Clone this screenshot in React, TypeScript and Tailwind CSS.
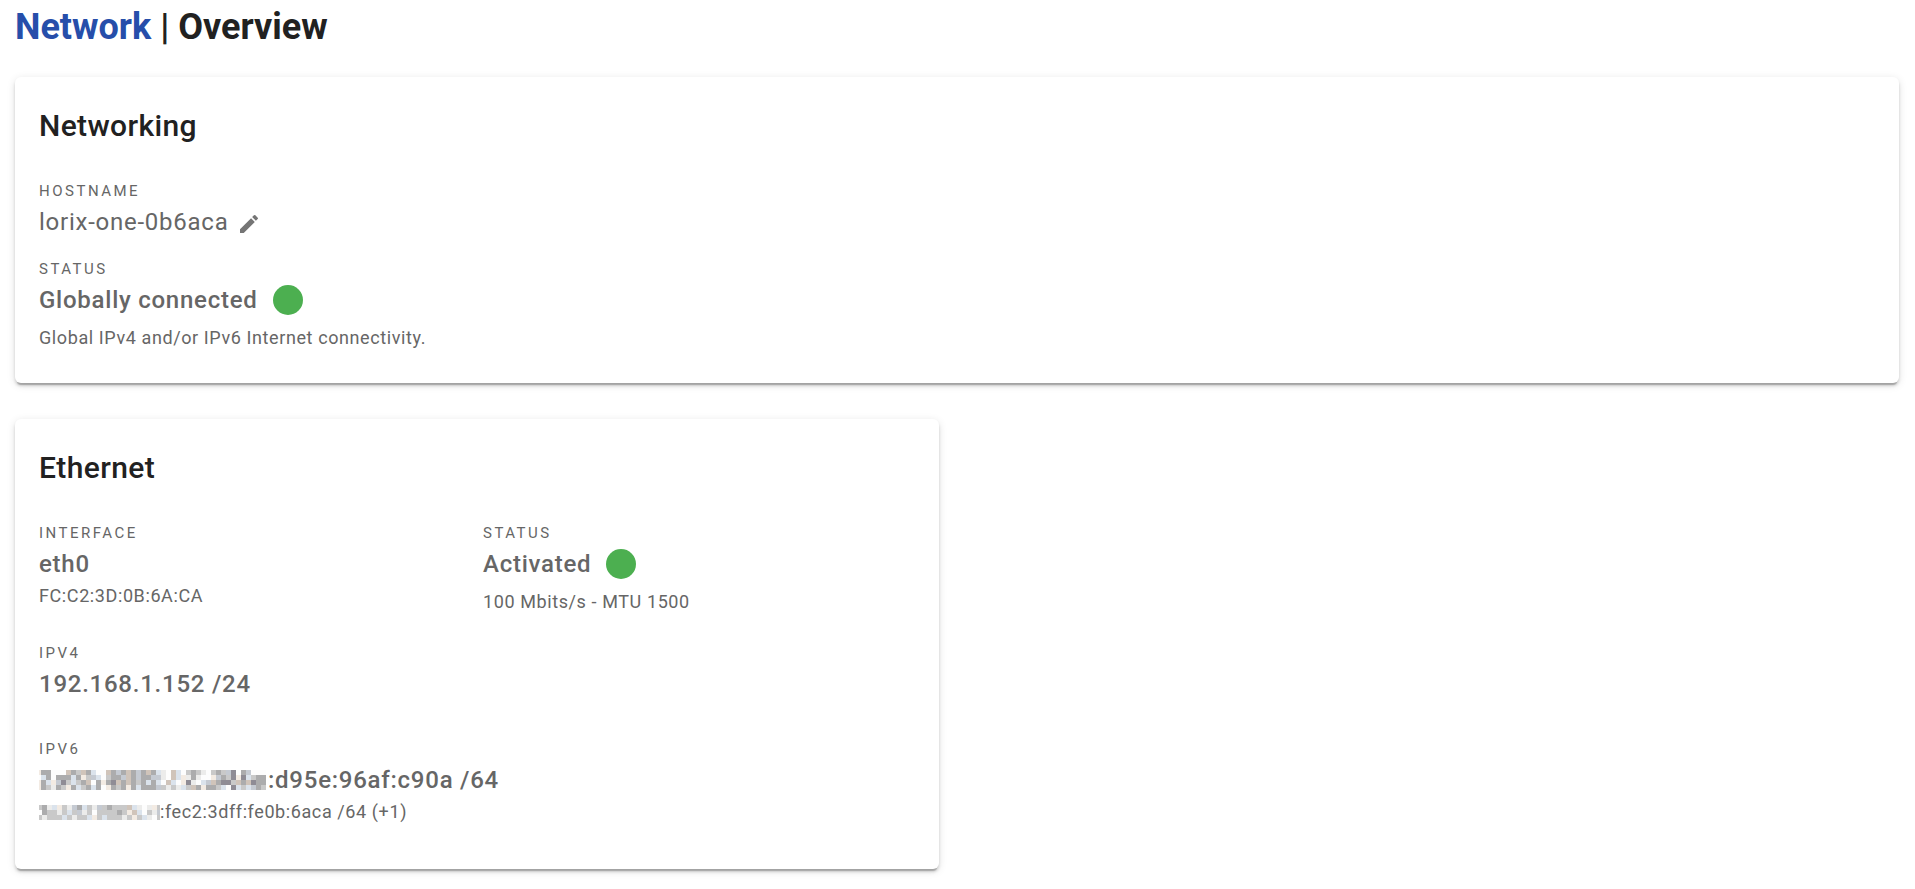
import React from 'react';
import { MdEdit } from 'react-icons/md';

interface FieldProps {
  label: string;
  children: React.ReactNode;
}

// One letter per 5px block of a redacted address prefix
const BLOCK_COLORS: Record<string, string> = {
  w: '#fdfdfd',
  l: '#ececeb',
  c: '#f3ebe3',
  b: '#dbe3ec',
  s: '#c5cad2',
  m: '#c9c9c9',
  t: '#d0c4ba',
  g: '#acacad',
  k: '#8f8c95',
};

const PRIMARY_MASK = [
  'cggwwwtgmtgbwwtgsgtgsgtgblwtbwmgmlwmgmskwgswww',
  'wbgwgggbgcmsbwmggstgsggsslwtbclglwwcsgmkckbmgg',
  'cgbcskmbmgtwgcgktgtgmgbgbwtbwcklwbstgkkmtgtkgg',
  'cgmlgmcgbmgbgwcgmgcgbgggsmlmlbmtgcggmbwkbmbsgm',
];

const SECONDARY_MASK = [
  'mglbcmlsgbmlsmgmmmtblwlcm',
  'wgmmlmbmslmwmmmmgmctbwmls',
  'mlmmmbmlmmbcmbmmmlmcmblwm',
];

const Mask: React.FC<{ rows: string[]; width: number; offset: number }> = ({ rows, width, offset }) => (
  <svg
    width={width}
    height={rows.length * 5}
    viewBox={`${offset} 0 ${width} ${rows.length * 5}`}
    shapeRendering="crispEdges"
    aria-label="Hidden"
    className="shrink-0"
  >
    {rows.map((row, y) =>
      row.split('').map((block, x) => (
        <rect key={`${x}-${y}`} x={x * 5} y={y * 5} width={5} height={5} fill={BLOCK_COLORS[block]} />
      ))
    )}
  </svg>
);

const Card: React.FC<{ title: string; children: React.ReactNode }> = ({ title, children }) => (
  <section className="rounded-md bg-white px-6 pt-[25px] shadow-[0_4px_1px_-2px_rgba(0,0,0,0.2),0_3px_3px_0_rgba(0,0,0,0.14),0_2px_8px_0_rgba(0,0,0,0.12)]">
    <h2 className="pb-[26px] text-[30px] leading-[48px] font-medium tracking-[0.0125em] text-[#212121]">{title}</h2>
    {children}
  </section>
);

const Field: React.FC<FieldProps> = ({ label, children }) => (
  <div>
    <div className="text-[15px] leading-[30px] tracking-[0.1667em] uppercase">{label}</div>
    {children}
  </div>
);

const Value: React.FC<{ children: React.ReactNode }> = ({ children }) => (
  <div className="flex items-center gap-0.5 text-2xl leading-8 font-medium tracking-[0.03125em]">{children}</div>
);

const Note: React.FC<{ children: React.ReactNode }> = ({ children }) => (
  <div className="flex items-center text-lg leading-8 tracking-[0.0333em]">{children}</div>
);

const StatusValue: React.FC<{ text: string }> = ({ text }) => (
  <div className="flex items-center gap-[15px] pb-1.5 text-2xl leading-8 font-medium tracking-[0.03125em]">
    {text}
    <span className="size-[30px] rounded-full bg-[#4caf50]" />
  </div>
);

const App: React.FC = () => {
  return (
    <main className="pr-4 pb-5 pl-[15px] font-[Roboto,sans-serif] text-[#666666]">
      <h1 className="pb-[23px] text-4xl leading-[54px] font-bold text-[#212121]">
        <a href="#network" className="text-[#264eaa]">Network</a> | Overview
      </h1>

      <Card title="Networking">
        <div className="pb-[29px]">
          <Field label="Hostname">
            <div className="flex items-center gap-[9px] pb-4 text-2xl leading-8 tracking-[0.03125em]">
              lorix-one-0b6aca
              <button aria-label="Edit hostname" className="pt-1 text-[#757575]">
                <MdEdit size={24} />
              </button>
            </div>
          </Field>
          <Field label="Status">
            <StatusValue text="Globally connected" />
            <Note>Global IPv4 and/or IPv6 Internet connectivity.</Note>
          </Field>
        </div>
      </Card>

      <div className="grid grid-cols-2 gap-9 pt-9">
        <Card title="Ethernet">
          <div className="grid grid-cols-2 gap-3 pb-5">
            <Field label="Interface">
              <Value>eth0</Value>
              <Note>FC:C2:3D:0B:6A:CA</Note>
            </Field>
            <Field label="Status">
              <StatusValue text="Activated" />
              <Note>100 Mbits/s - MTU 1500</Note>
            </Field>
          </div>
          <Field label="IPv4">
            <Value>192.168.1.152 /24</Value>
          </Field>
          <div className="pt-[34px] pb-[41px]">
            <Field label="IPv6">
              <Value>
                <Mask rows={PRIMARY_MASK} width={227} offset={3} />
                :d95e:96af:c90a /64
              </Value>
              <Note>
                <Mask rows={SECONDARY_MASK} width={121} offset={2} />
                :fec2:3dff:fe0b:6aca /64 (+1)
              </Note>
            </Field>
          </div>
        </Card>
      </div>
    </main>
  );
};

export default App;
